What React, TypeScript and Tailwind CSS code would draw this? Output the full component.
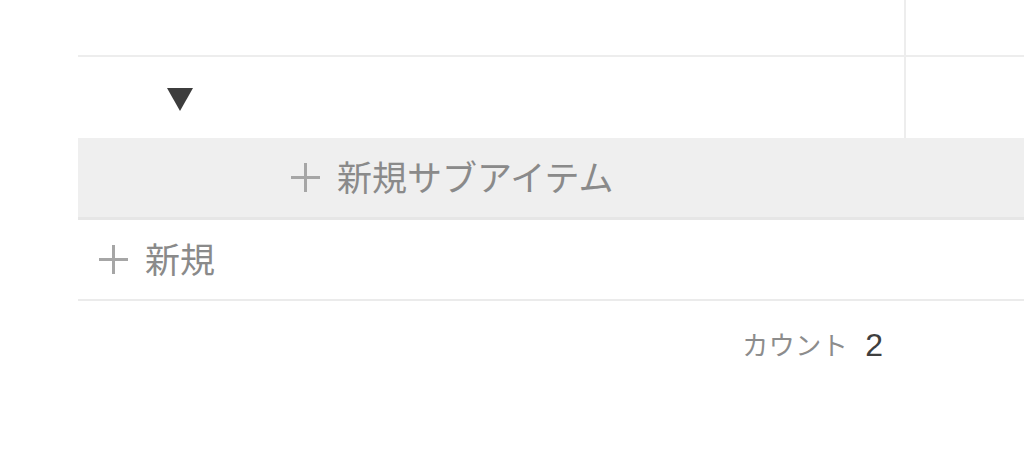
export default function App() {
  return (
    <div
      className="h-[472px] w-[1024px] overflow-hidden bg-white pl-[78px]"
      style={{ fontFamily: '"Noto Sans", "Noto Sans CJK JP", sans-serif' }}
    >
      {/* First row */}
      <div className="flex h-[57px] border-b-2 border-[#ededed]">
        <div className="w-[828px] border-r-2 border-[#ededed]" />
        <div className="flex-1" />
      </div>

      {/* Parent row with toggle */}
      <div className="flex h-[81px]">
        <div className="flex w-[828px] items-center border-r-2 border-[#ededed] pl-[89px] pt-[4px]">
          <svg width="26" height="23" viewBox="0 0 26 23">
            <polygon points="0,0 26,0 13,23" fill="#3d3d3d" />
          </svg>
        </div>
        <div className="flex-1" />
      </div>

      {/* New sub item */}
      <div className="flex h-[82px] items-center border-b-[3px] border-[#e6e6e6] bg-[#efefef] pl-[212px]">
        <PlusIcon />
        <span className="ml-[16px] text-[35px] leading-none text-[#8a8a8a]">新規サブアイテム</span>
      </div>

      {/* New row */}
      <div className="flex h-[81px] items-center border-b-2 border-[#ebebeb] pl-[20px]">
        <PlusIcon />
        <span className="ml-[16px] text-[35px] leading-none text-[#8a8a8a]">新規</span>
      </div>

      {/* Count */}
      <div className="flex h-[88px] w-[828px] items-center justify-end pr-[23px]">
        <span className="text-[26px] leading-none tracking-[0.5px] text-[#8c8c8c]">カウント</span>
        <span
          className="ml-[17px] text-[32px] leading-none text-[#3f3f3f]"
          style={{ fontFamily: '"Liberation Sans", sans-serif' }}
        >
          2
        </span>
      </div>
    </div>
  );
}

function PlusIcon() {
  return (
    <svg width="31" height="31" viewBox="0 0 31 31">
      <path d="M15.5 1v29M1 15.5h29" stroke="#a6a6a6" strokeWidth="3" />
    </svg>
  );
}
